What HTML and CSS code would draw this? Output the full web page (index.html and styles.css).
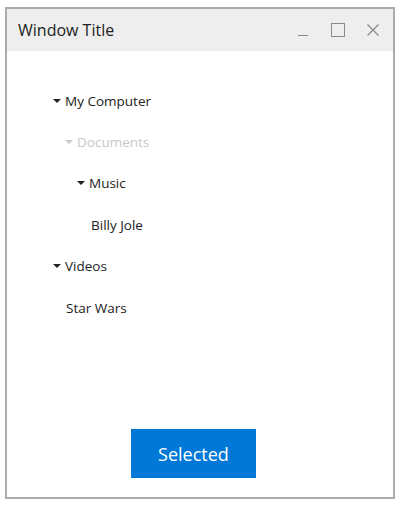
FILE: index.html
```html
<!DOCTYPE html>
<html>
<head>
<meta charset="utf-8">
<link rel="stylesheet" href="styles.css">
</head>
<body>
<div class="window">
  <div class="titlebar">
    <span class="title">Window Title</span>
    <div class="controls">
      <svg class="ctl" width="14" height="14" viewBox="0 0 14 14"><line x1="2" y1="12.5" x2="12" y2="12.5" stroke="#8a8a8a" stroke-width="1"/></svg>
      <svg class="ctl" width="14" height="14" viewBox="0 0 14 14"><rect x="0.5" y="0.5" width="13" height="13" fill="none" stroke="#8a8a8a" stroke-width="1"/></svg>
      <svg class="ctl" width="14" height="14" viewBox="0 0 14 14"><path d="M1.5 1.5 L12.5 12.5 M12.5 1.5 L1.5 12.5" stroke="#8a8a8a" stroke-width="1.2"/></svg>
    </div>
  </div>
  <div class="content">
    <ul class="tree">
      <li class="node lvl0"><span class="caret"></span>My Computer</li>
      <li class="node lvl1 disabled"><span class="caret"></span>Documents</li>
      <li class="node lvl2"><span class="caret"></span>Music</li>
      <li class="node lvl3 leaf">Billy Jole</li>
      <li class="node lvl0"><span class="caret"></span>Videos</li>
      <li class="node lvl1 leaf">Star Wars</li>
    </ul>
    <div class="actions">
      <button class="btn">Selected</button>
    </div>
  </div>
</div>
</body>
</html>
```
FILE: styles.css
```css
html, body {
  margin: 0;
  padding: 0;
  background: #fff;
}
body {
  font-family: "Open Sans", "Noto Sans", sans-serif;
  padding: 7px 0 0 5px;
}
.window {
  width: 386px;
  height: 488px;
  border: 2px solid #ababab;
  display: flex;
  flex-direction: column;
  background: #fff;
}
.titlebar {
  height: 42px;
  background: #eeeeee;
  display: flex;
  align-items: center;
  justify-content: space-between;
  padding: 0 13px 0 11px;
}
.title {
  font-size: 16px;
  color: #222;
}
.controls {
  display: flex;
  align-items: center;
  gap: 21px;
}
.ctl {
  display: block;
}
.content {
  flex: 1;
  display: flex;
  flex-direction: column;
}
.tree {
  list-style: none;
  margin: 0;
  padding: 29px 0 0 46px;
  display: flex;
  flex-direction: column;
}
.node {
  height: 41.4px;
  display: flex;
  align-items: center;
  font-size: 13.5px;
  color: #222;
}
.node.disabled {
  color: #c8c8c8;
}
.caret {
  width: 0;
  height: 0;
  border-left: 4px solid transparent;
  border-right: 4px solid transparent;
  border-top: 4.5px solid currentColor;
  margin-right: 4px;
}
.lvl0 { padding-left: 0; }
.lvl1 { padding-left: 12px; }
.lvl2 { padding-left: 24px; }
.lvl3 { padding-left: 36px; }
.lvl1.leaf { padding-left: 13px; }
.lvl3.leaf { padding-left: 38px; }
.actions {
  margin-top: auto;
  display: flex;
  justify-content: center;
  padding: 0 13px 19px 0;
}
.btn {
  width: 125px;
  height: 49px;
  background: #0078d7;
  color: #fff;
  border: none;
  font-family: "Open Sans", "Noto Sans", sans-serif;
  font-size: 18px;
  padding: 0;
}
```
